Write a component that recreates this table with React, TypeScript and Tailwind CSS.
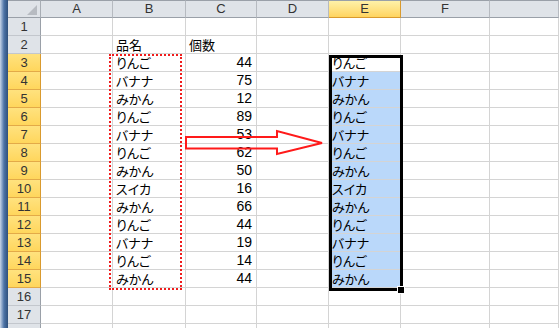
import React from 'react'

const colNames = ['A', 'B', 'C', 'D', 'E', 'F', 'G']

const items: [string, number][] = [
  ['りんご', 44],
  ['バナナ', 75],
  ['みかん', 12],
  ['りんご', 89],
  ['バナナ', 53],
  ['りんご', 62],
  ['みかん', 50],
  ['スイカ', 16],
  ['みかん', 66],
  ['りんご', 44],
  ['バナナ', 19],
  ['りんご', 14],
  ['みかん', 44],
]

const rows = Array.from({ length: 18 }, (_, i) => i + 1)

const jp = "font-['Noto_Sans_CJK_JP',sans-serif] [font-feature-settings:'palt']"
const latin = "font-['Liberation_Sans',Arial,sans-serif]"

function cellText(row: number, col: string) {
  if (row === 2 && col === 'B') return '品名'
  if (row === 2 && col === 'C') return '個数'
  if (row >= 3 && row <= 15) {
    const [name, count] = items[row - 3]
    if (col === 'B' || col === 'E') return name
    if (col === 'C') return String(count)
  }
  return ''
}

function Cell({ row, col }: { row: number; col: string }) {
  const text = cellText(row, col)
  const isNumber = /^\d+$/.test(text)
  const selected = col === 'E' && row >= 4 && row <= 15
  return (
    <div
      className={`h-[18px] border-r border-b border-[#d4d4d4] flex items-end overflow-hidden whitespace-nowrap text-black leading-[17px] ${
        selected ? 'bg-[#bad8fa]' : 'bg-white'
      } ${isNumber ? `justify-end pr-[4px] text-[14px] ${latin}` : `pl-[3px] text-[13px] ${jp}`}`}
    >
      {text}
    </div>
  )
}

export default function App() {
  return (
    <div className="relative w-[559px] h-[328px] overflow-hidden bg-white flex">
      {/* window edge */}
      <div className="w-[8px] h-full shrink-0 bg-gradient-to-r from-[#c9d6e8] via-[#4d73a6] to-[#2f507c]" />

      <div className="flex-1 flex flex-col">
        <div className="h-[2px] bg-[#eef1f5]" />

        <div className="grid grid-cols-[33px_72px_73px_71px_72px_72px_89px_1fr] auto-rows-[18px]">
          {/* header row */}
          <div className="relative h-[18px] bg-[#dfe3e8] border-t border-t-[#9aa0a8] border-r border-r-[#a8adb4] border-b border-b-[#9aa0a8]">
            <svg className="absolute right-[3px] bottom-[2px]" width="10" height="10" viewBox="0 0 10 10">
              <polygon points="10,0 10,10 0,10" fill="#b7bbc1" />
            </svg>
          </div>
          {colNames.map((c) => (
            <div
              key={c}
              className={`h-[18px] flex items-center justify-center text-[13px] leading-[16px] text-[#333] border-t border-t-[#9aa0a8] border-r border-b ${latin} ${
                c === 'E'
                  ? 'bg-gradient-to-b from-[#fff1a8] to-[#ffd45e] border-r-[#d99a2e] border-b-[#d99a2e]'
                  : 'bg-[#dfe3e8] border-r-[#b6bac0] border-b-[#9aa0a8]'
              }`}
            >
              {c === 'G' ? '' : c}
            </div>
          ))}

          {rows.map((r) => {
            const sel = r >= 3 && r <= 15
            return (
              <React.Fragment key={r}>
                <div
                  className={`h-[18px] flex items-center justify-center text-[13px] leading-[17px] text-[#333] border-r border-b ${latin} ${
                    sel
                      ? 'bg-gradient-to-b from-[#ffe27e] to-[#ffd65c] border-r-[#d99a2e] border-b-[#e3aa48]'
                      : 'bg-[#dfe3e8] border-r-[#9aa0a8] border-b-[#c3c7cd]'
                  }`}
                >
                  {r < 18 ? r : ''}
                </div>
                {colNames.map((c) => (
                  <Cell key={c} row={r} col={c} />
                ))}
              </React.Fragment>
            )
          })}
        </div>
      </div>

      {/* copy marquee around B3:B15 */}
      <div className="absolute left-[109px] top-[54px] w-[73px] h-[236px] border-2 border-dotted border-[#f01c1c]" />

      {/* arrow shape */}
      <svg className="absolute left-[182px] top-[127px]" width="146" height="32" viewBox="182 127 146 32">
        <polygon
          points="186,137 277,137 277,131 322,143 277,154 277,148.5 186,148.5"
          fill="none"
          stroke="#ff1a1a"
          strokeWidth="2"
        />
      </svg>

      {/* selection E3:E15 */}
      <div className="absolute left-[329px] top-[55px] w-[74px] h-[236px] border-[3px] border-black" />
      <div className="absolute left-[398px] top-[287px] w-[6px] h-[6px] bg-black outline outline-1 outline-white" />
    </div>
  )
}
